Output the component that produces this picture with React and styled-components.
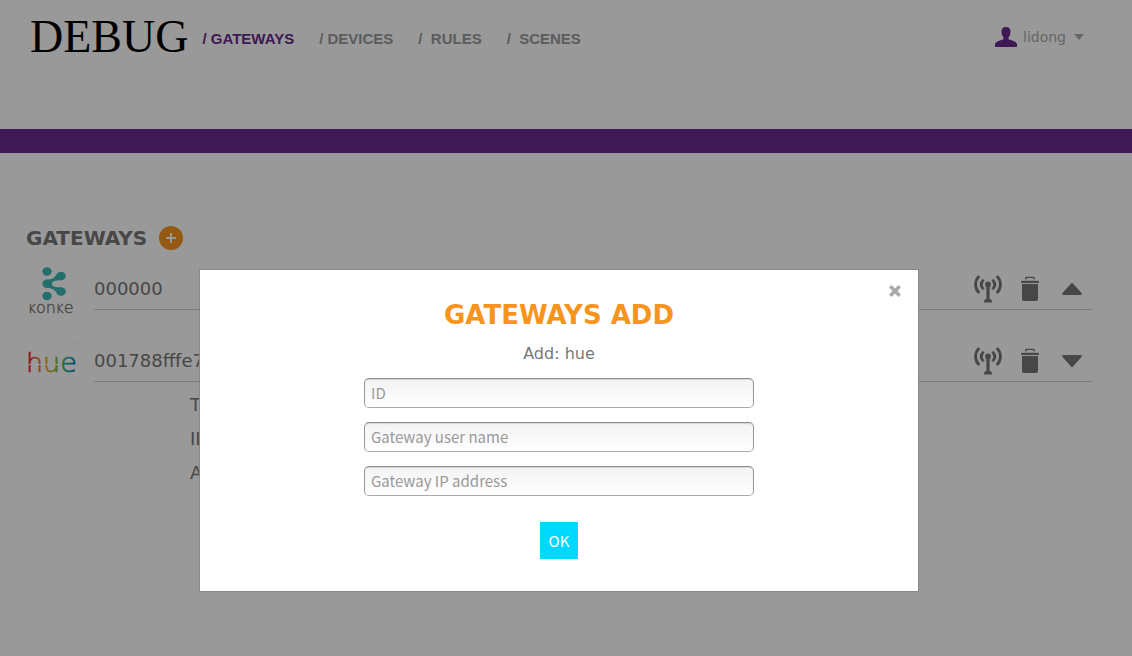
import React from "react";
import styled, { createGlobalStyle } from "styled-components";

const sans = '"DejaVu Sans", Verdana, sans-serif';
const formFont = '"Noto Sans CJK SC", sans-serif';

const Global = createGlobalStyle`
  * { box-sizing: border-box; }
  body { margin: 0; background: #fff; color: #777; font-family: ${sans}; }
  button { padding: 0; border: 0; background: none; font: inherit; color: inherit; cursor: pointer; }
  ul, h1, h2, p { margin: 0; padding: 0; list-style: none; }
  svg { display: block; }
`;

const Page = styled.div`
  min-height: 100vh;
`;

const Header = styled.header`
  display: flex;
  align-items: flex-start;
  min-height: 129px;
  padding: 10px 48px 0 30px;
`;

const Logo = styled.a`
  color: #000;
  font: 46px/54px "Liberation Serif", "Times New Roman", serif;
  text-decoration: none;
`;

const Nav = styled.nav`
  display: flex;
  gap: 25px;
  padding: 18px 0 0 14px;
`;

const NavLink = styled.a`
  color: ${(p) => (p.$active ? "#692a8e" : "#999")};
  font: bold 15px/22px "Liberation Sans", Arial, sans-serif;
  text-decoration: none;
  white-space: pre;
`;

const UserMenu = styled.button`
  display: flex;
  align-items: center;
  gap: 6px;
  height: 22px;
  margin: 16px 0 0 auto;
  && { color: #aaa; font-size: 14px; }
  svg:last-child { margin-left: 2px; }
`;

const Band = styled.div`
  height: 24px;
  background: #692a8e;
`;

const Main = styled.main`
  padding: 73px 40px 40px 26px;
`;

const Heading = styled.div`
  display: flex;
  align-items: center;
  gap: 12px;
  margin-bottom: 16px;
`;

const Title = styled.h1`
  font-size: 20px;
  line-height: 24px;
`;

const GatewayList = styled.ul`
  display: grid;
  gap: 20px;
`;

const Gateway = styled.li`
  display: flex;
  gap: 16px;
  min-height: 52px;
`;

const Brand = styled.div`
  flex: 0 0 52px;
`;

const GatewayBody = styled.div`
  flex: 1;
`;

const GatewayBar = styled.div`
  display: flex;
  align-items: center;
  gap: 14px;
  height: 44px;
  padding: 2px 6px 0 0;
  border-bottom: 1px solid #ccc;
`;

const GatewayName = styled.span`
  flex: 1;
  font-size: 18px;
`;

const IconButton = styled.button`
  width: 28px;
  height: 28px;
`;

const Details = styled.ul`
  padding: 6px 0 0 96px;
  font-size: 18px;
  line-height: 34px;
`;

const Overlay = styled.div`
  position: fixed;
  inset: 0;
  display: flex;
  justify-content: center;
  align-items: flex-start;
  padding: 269px 14px 0 0;
  background: rgba(0, 0, 0, 0.4);
`;

const Dialog = styled.section`
  position: relative;
  display: flex;
  flex-direction: column;
  align-items: center;
  width: 100%;
  max-width: 720px;
  padding: 28px 24px 32px;
  border: 1px solid #888;
  background: #fff;
`;

const CloseButton = styled.button`
  position: absolute;
  top: 15px;
  right: 17px;
`;

const DialogTitle = styled.h2`
  color: #f7941e;
  font-size: 26px;
  line-height: 34px;
`;

const DialogNote = styled.p`
  margin: 10px 0 12px;
  font-size: 16px;
  line-height: 24px;
`;

const Form = styled.form`
  display: flex;
  flex-direction: column;
  align-items: center;
  gap: 14px;
  width: 100%;
  max-width: 390px;
`;

const Field = styled.input`
  width: 100%;
  height: 30px;
  padding: 0 6px 2px;
  border: 1px solid #aaa;
  border-color: #8c8c8c #999 #aaa;
  border-radius: 5px;
  background: linear-gradient(#f3f3f3, #fff);
  box-shadow: inset 0 1px 1px rgba(0, 0, 0, 0.12);
  color: #777;
  font: 15px ${formFont};
  &::placeholder { color: #999; opacity: 1; }
`;

const OkButton = styled.button`
  && {
    min-width: 38px;
    height: 37px;
    margin-top: 12px;
    padding: 0 8px;
    background: #00d8ff;
    color: #fff;
    font: 15px ${formFont};
  }
`;

const UserIcon = () => (
  <svg width="22" height="20" fill="#692a8e" aria-hidden="true">
    <path d="M11 0c3 0 4.500 1.600 4.500 4.500 0 2.500-.8 4.600-2 5.900v1.800c3.700 1.100 8.500 2.400 8.500 5.300V20H0v-2.500c0-2.900 4.800-4.200 8.500-5.300v-1.800c-1.200-1.300-2-3.400-2-5.900C6.500 1.600 8 0 11 0z" />
  </svg>
);

const SmallCaret = () => (
  <svg width="10" height="6" fill="#aaa" aria-hidden="true">
    <path d="M0 0h10L5 6z" />
  </svg>
);

const AddIcon = () => (
  <svg width="24" height="24" aria-hidden="true">
    <circle cx="12" cy="12" r="12" fill="#f7941e" />
    <path d="M7 12h10M12 7v10" stroke="#fff" strokeWidth="2" />
  </svg>
);

const AntennaIcon = () => (
  <svg width="28" height="28" fill="none" stroke="#777" strokeWidth="2.800" aria-hidden="true">
    <path d="M5.200 1C.3 6 .3 13 5.200 18M22.800 1c4.900 5 4.900 12 0 17" />
    <path d="M9.600 4.700c-3 3-3 6.600 0 9.600M18.400 4.700c3 3 3 6.600 0 9.600" />
    <circle cx="14" cy="9.500" r="2.900" fill="#777" stroke="none" />
    <path d="M12.400 10h3.200v14.200h.9c1 0 1.500 1.500 1.500 3.300h-8c0-1.800.5-3.300 1.500-3.300h.9z" fill="#777" stroke="none" />
  </svg>
);

const TrashIcon = () => (
  <svg width="28" height="28" fill="#777" aria-hidden="true">
    <path d="M9.800 4.500V3.400c0-.7.4-1 1.100-1h6.200c.7 0 1.100.3 1.100 1v1.100" fill="none" stroke="#777" strokeWidth="1.400" />
    <path d="M5 8V7.500C5 6.300 5.600 5.800 6.800 5.800h14.400c1.200 0 1.800.5 1.800 1.700V8z" />
    <path d="M6 9h16v15c0 1.300-.7 2-2 2H8c-1.300 0-2-.7-2-2z" />
  </svg>
);

const CaretIcon = ({ up }) => (
  <svg width="28" height="28" fill="#777" aria-hidden="true">
    <path
      d={
        up
          ? "M13 8.500q1-1 2 0l8.500 9.500q.9 1.800-.7 2H5.200q-1.600-.2-.7-2z"
          : "M13 19.500q1 1 2 0l8.500-9.500q.9-1.800-.7-2H5.200q-1.600.2-.7 2z"
      }
    />
  </svg>
);

const KonkeLogo = () => (
  <svg width="52" height="52" role="img" aria-label="Konke">
    <g fill="#3cbab2">
      <ellipse cx="21" cy="5.500" rx="4.700" ry="4.200" />
      <ellipse cx="35" cy="10" rx="4.800" ry="4.200" />
      <ellipse cx="21" cy="17.700" rx="4.700" ry="4.200" />
      <ellipse cx="35" cy="25.500" rx="4.800" ry="4.200" />
      <ellipse cx="21" cy="30" rx="4.700" ry="4.200" />
      <path d="M21 13.500c4.500.3 7-1.500 10.200-5.500l3.300 6.200c-4.500.2-8.500.6-8.500 3.600s4 3.600 8.500 3.600l-3.300 6c-2-3.200-5.200-5.700-10.200-5.500z" />
    </g>
    <text x="2" y="47" fill="#777" stroke="#777" strokeWidth=".4" fontFamily="DejaVu Sans" fontWeight="200">
      <tspan fontSize="12">K</tspan>
      <tspan fontSize="16">on</tspan>
      <tspan fontSize="12">K</tspan>
      <tspan fontSize="16">e</tspan>
    </text>
  </svg>
);

const HueLogo = () => (
  <svg width="52" height="48" role="img" aria-label="hue">
    <defs>
      <linearGradient id="hue" gradientUnits="userSpaceOnUse" x1="2" y1="0" x2="50" y2="0">
        <stop offset="0" stopColor="#d9202e" />
        <stop offset=".1" stopColor="#e03a2a" />
        <stop offset=".28" stopColor="#f08a1c" />
        <stop offset=".45" stopColor="#e0b01c" />
        <stop offset=".6" stopColor="#7cb832" />
        <stop offset=".75" stopColor="#2fb278" />
        <stop offset=".9" stopColor="#0a9bb0" />
        <stop offset="1" stopColor="#0a5fae" />
      </linearGradient>
    </defs>
    <text x="0" y="34" fill="url(#hue)" stroke="url(#hue)" strokeWidth=".6" fontFamily="DejaVu Sans" fontWeight="200" fontSize="27">hue</text>
    <path d="M0 26.500h33" stroke="#fff" />
    <path d="M48 5h1v2" fill="none" stroke="#ddd" />
  </svg>
);

const CloseIcon = () => (
  <svg width="12" height="12" stroke="#aaa" strokeWidth="3.500" aria-hidden="true">
    <path d="M1.300 1.300l9.400 9.400M10.700 1.300l-9.400 9.400" />
  </svg>
);

const navItems = ["/ GATEWAYS", "/ DEVICES", "/  RULES", "/  SCENES"];

const gateways = [
  { id: "000000", Brand: KonkeLogo },
  { id: "001788fffe7", Brand: HueLogo, details: ["Type", "ID", "Address"] },
];

const fields = ["ID", "Gateway user name", "Gateway IP address"];

export default function App() {
  return (
    <Page>
      <Global />
      <Header>
        <Logo href="#">DEBUG</Logo>
        <Nav>
          {navItems.map((label, i) => (
            <NavLink key={label} href="#" $active={i === 0}>{label}</NavLink>
          ))}
        </Nav>
        <UserMenu type="button">
          <UserIcon />
          lidong
          <SmallCaret />
        </UserMenu>
      </Header>
      <Band />
      <Main>
        <Heading>
          <Title>GATEWAYS</Title>
          <button type="button" aria-label="Add gateway"><AddIcon /></button>
        </Heading>
        <GatewayList>
          {gateways.map(({ id, Brand: BrandLogo, details }) => (
            <Gateway key={id}>
              <Brand><BrandLogo /></Brand>
              <GatewayBody>
                <GatewayBar>
                  <GatewayName>{id}</GatewayName>
                  <IconButton type="button" aria-label="Connect"><AntennaIcon /></IconButton>
                  <IconButton type="button" aria-label="Delete"><TrashIcon /></IconButton>
                  <IconButton type="button" aria-label="Toggle details"><CaretIcon up={!details} /></IconButton>
                </GatewayBar>
                {details && (
                  <Details>
                    {details.map((d) => <li key={d}>{d}</li>)}
                  </Details>
                )}
              </GatewayBody>
            </Gateway>
          ))}
        </GatewayList>
      </Main>
      <Overlay>
        <Dialog role="dialog" aria-modal="true" aria-labelledby="dialog-title">
          <CloseButton type="button" aria-label="Close"><CloseIcon /></CloseButton>
          <DialogTitle id="dialog-title">GATEWAYS ADD</DialogTitle>
          <DialogNote>Add: hue</DialogNote>
          <Form onSubmit={(e) => e.preventDefault()}>
            {fields.map((f) => <Field key={f} type="text" placeholder={f} aria-label={f} />)}
            <OkButton type="submit">OK</OkButton>
          </Form>
        </Dialog>
      </Overlay>
    </Page>
  );
}
